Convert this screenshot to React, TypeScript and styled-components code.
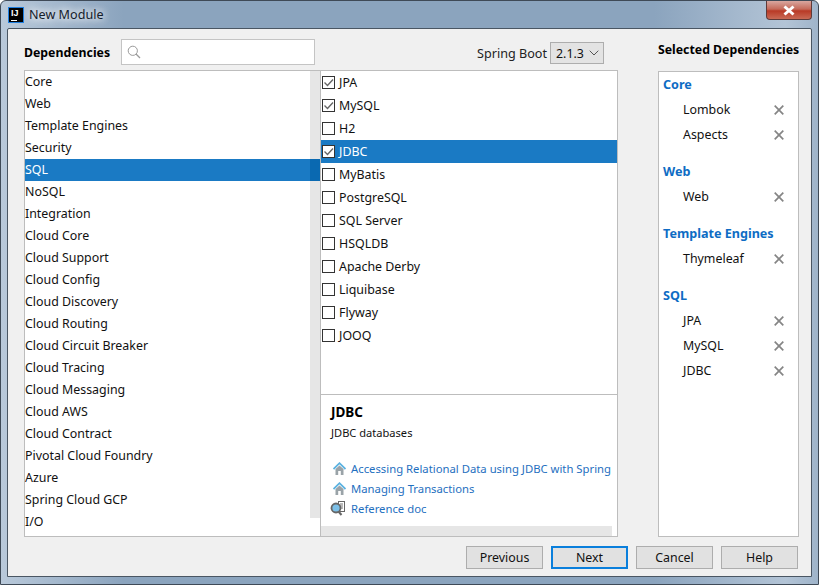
import React from "react";
import styled, { createGlobalStyle } from "styled-components";

const Global = createGlobalStyle`
  html, body { margin: 0; padding: 0; }
  body { font-family: "Noto Sans", "Open Sans", sans-serif; font-size: 12.4px; color: #111; }
  * { box-sizing: border-box; }
`;

const Window = styled.div`
  width: 819px; height: 585px; position: relative; display: flex; flex-direction: column;
  border: 1px solid #3f4a57; border-radius: 6px 6px 0 0; padding: 0 6px 7px;
  background: linear-gradient(90deg, #b9c9da 0, #8ba4be 15%, #8ba4be 80%, #b3c4d6 96%, #9fb4ca 100%);
`;
const TitleBar = styled.div`
  height: 27px; display: flex; align-items: center; gap: 5px; padding-left: 1px; flex: none;
`;
const TitleText = styled.span`
  font-size: 12.6px; color: #15202b; text-shadow: 0 0 8px #fff, 0 0 8px #fff;
`;
const Logo = styled.div`
  width: 16px; height: 16px; background: #000; border: 1px solid #1f7fe0; color: #fff;
  font-family: "Liberation Sans", sans-serif; font-weight: 700; font-size: 9px; line-height: 9px;
  padding-left: 2px; padding-top: 1px; position: relative;
  &::after { content: ""; position: absolute; left: 2px; bottom: 1px; width: 6px; height: 1px; background: #fff; }
`;
const CloseBtn = styled.div`
  position: absolute; top: 0; right: 6px; width: 46px; height: 19px; border: 1px solid #5f3a38; border-top: 0;
  border-radius: 0 0 4px 4px; display: flex; align-items: center; justify-content: center;
  background: linear-gradient(180deg, #d9a79f 0, #c56a5a 45%, #b93a26 55%, #c96a55 100%);
`;
const Dialog = styled.div`
  flex: 1; min-height: 0; background: #f0f0f0; border: 1px solid #4a5663; display: flex; flex-direction: column;
  padding: 10px 12px 8px 16px; border-radius: 2px 2px 0 0;
`;
const Body = styled.div`
  display: flex; gap: 40px; height: 498px; flex: none;
`;
const LeftCol = styled.div`
  width: 594px; display: flex; flex-direction: column;
`;
const TopBar = styled.div`
  height: 31px; display: flex; align-items: flex-start; flex: none;
`;
const Heading = styled.div`
  font-weight: 700; font-size: 12.3px; line-height: 28px; color: #000;
`;
const Search = styled.div`
  width: 194px; height: 26px; margin-left: 11px; background: #fff; border: 1px solid #c4c4c4;
  display: flex; align-items: center; padding-left: 5px;
`;
const Spring = styled.div`
  margin-left: auto; display: flex; align-items: center; gap: 3px; height: 26px; margin-top: 1px; margin-right: 14px;
`;
const SpringLabel = styled.span`
  font-size: 12.6px; color: #222;
`;
const Select = styled.div`
  width: 54px; height: 22px; background: #e3e3e3; border: 1px solid #adadad; display: flex; align-items: center;
  justify-content: space-between; padding: 0 4px 0 5px; font-size: 12.4px;
`;
const Panels = styled.div`
  flex: 1; min-height: 0; display: flex; background: #fff; border: 1px solid #bdbdbd;
`;
const CatList = styled.div`
  width: 296px; flex: none; border-right: 1px solid #bdbdbd; display: flex;
`;
const CatRows = styled.div`
  flex: 1; min-width: 0;
`;
const CatRow = styled.div<{ $sel?: boolean }>`
  height: 22px; line-height: 22px; font-size: 12.4px; position: relative;
  background: ${(p) => (p.$sel ? "#1a7ac4" : "transparent")};
  color: ${(p) => (p.$sel ? "#fff" : "#111")};
  margin-right: ${(p) => (p.$sel ? "-10px" : "0")};
  &::after {
    content: ""; position: absolute; top: 0; right: 0; bottom: 0; width: 10px;
    background: ${(p) => (p.$sel ? "#0a69b1" : "transparent")};
  }
`;
const VScroll = styled.div`
  width: 10px; height: 447px; background: #e6e6e6; flex: none;
`;
const Mid = styled.div`
  flex: 1; min-width: 0; display: flex; flex-direction: column;
`;
const DepList = styled.div`
  height: 324px; flex: none; border-bottom: 1px solid #bdbdbd;
`;
const DepRow = styled.div<{ $sel?: boolean }>`
  height: 23px; display: flex; align-items: center; gap: 4px; padding-left: 1px; font-size: 12.4px;
  background: ${(p) => (p.$sel ? "#1a7ac4" : "transparent")};
  color: ${(p) => (p.$sel ? "#fff" : "#111")};
`;
const DepLabel = styled.span`
  line-height: 23px; height: 23px;
`;
const Box = styled.div`
  width: 13px; height: 13px; border: 1px solid #333; background: #fff; flex: none; display: flex;
`;
const Detail = styled.div`
  flex: 1; min-height: 0; display: flex; flex-direction: column; position: relative; padding: 7px 0 0 10px;
`;
const DetailTitle = styled.div`
  font-weight: 700; font-size: 13.5px; line-height: 20px; color: #000;
`;
const DetailDesc = styled.div`
  font-size: 11.1px; line-height: 20px; margin-top: 1px; margin-bottom: 15px; color: #111;
`;
const LinkRow = styled.div`
  height: 20px; display: flex; align-items: center; gap: 5px; color: #1f6fc0; font-size: 11.3px; white-space: nowrap;
  svg { flex: none; }
`;
const HScroll = styled.div`
  position: absolute; left: 0; bottom: 0; width: 291px; height: 10px; background: #e6e6e6;
`;
const RightCol = styled.div`
  width: 141px; display: flex; flex-direction: column; flex: none;
`;
const RightHead = styled.div`
  font-weight: 700; font-size: 12.3px; line-height: 22px; height: 32px; white-space: nowrap; color: #000;
`;
const RightPanel = styled.div`
  flex: 1; background: #fff; border: 1px solid #bdbdbd; padding: 0 0 0 4px;
`;
const Group = styled.div`
  margin-bottom: 12px;
`;
const GroupHead = styled.div`
  height: 25px; line-height: 25px; font-weight: 700; color: #0e6cc4; font-size: 12.6px; white-space: nowrap;
`;
const Item = styled.div`
  height: 25px; display: flex; align-items: center; justify-content: space-between; padding: 0 14px 0 20px; font-size: 12.4px;
`;
const ItemName = styled.span`
  height: 25px; line-height: 26px;
`;
const Footer = styled.div`
  margin-top: 9px; margin-right: 1px; display: flex; justify-content: flex-end; gap: 8px; flex: none;
`;
const Btn = styled.div<{ $primary?: boolean }>`
  width: 77px; height: 23px; background: #e1e1e1; display: flex; align-items: center; justify-content: center;
  border: ${(p) => (p.$primary ? "2px solid #0a7fdc" : "1px solid #adadad")}; font-size: 12.4px; color: #111;
`;

const Check = () => (
  <svg width="11" height="11" viewBox="0 0 11 11"><path d="M1.5 5.5 4.5 8.5 10 2.5" fill="none" stroke="#666" strokeWidth="1.4" /></svg>
);
const Cross = () => (
  <svg width="10" height="10" viewBox="0 0 10 10"><path d="M.7.7 9.3 9.3M9.3.7.7 9.3" stroke="#858585" strokeWidth="1.7" /></svg>
);
const House = () => (
  <svg width="13" height="13" viewBox="0 0 13 13" style={{ marginLeft: 2 }}>
    <path d="M2.5 7V13H5.2V9H7.8V13H10.5V7L6.5 3.5Z" fill="#9aa3a8" />
    <path d="M.5 7 6.5 1.2 12.5 7" fill="none" stroke="#5cb2e0" strokeWidth="1.8" />
  </svg>
);
const RefDoc = () => (
  <svg width="16" height="15" viewBox="0 0 16 15" style={{ marginLeft: -1 }}>
    <rect x="8.5" y=".5" width="6" height="10" fill="#fff" stroke="#666" />
    <path d="M10 3h3M10 5h3M10 7h3" stroke="#777" />
    <circle cx="6" cy="7" r="4.5" fill="#7cc0e8" stroke="#666" strokeWidth="1.8" />
    <path d="M8.5 10.5 11.5 14" stroke="#666" strokeWidth="2" />
  </svg>
);

const cats = ["Core","Web","Template Engines","Security","SQL","NoSQL","Integration","Cloud Core","Cloud Support","Cloud Config","Cloud Discovery","Cloud Routing","Cloud Circuit Breaker","Cloud Tracing","Cloud Messaging","Cloud AWS","Cloud Contract","Pivotal Cloud Foundry","Azure","Spring Cloud GCP","I/O"];
const deps = [["JPA",1],["MySQL",1],["H2",0],["JDBC",1],["MyBatis",0],["PostgreSQL",0],["SQL Server",0],["HSQLDB",0],["Apache Derby",0],["Liquibase",0],["Flyway",0],["JOOQ",0]] as const;
const groups = [
  { name: "Core", items: ["Lombok", "Aspects"] },
  { name: "Web", items: ["Web"] },
  { name: "Template Engines", items: ["Thymeleaf"] },
  { name: "SQL", items: ["JPA", "MySQL", "JDBC"] },
];

export default function App() {
  return (
    <Window>
      <Global />
      <TitleBar>
        <Logo>IJ</Logo>
        <TitleText>New Module</TitleText>
      </TitleBar>
      <CloseBtn>
        <svg width="14" height="11" viewBox="0 0 14 11"><path d="M2.5 1.5 11.5 9.5M11.5 1.5 2.5 9.5" stroke="#fff" strokeWidth="3" /></svg>
      </CloseBtn>
      <Dialog>
        <Body>
          <LeftCol>
            <TopBar>
              <Heading>Dependencies</Heading>
              <Search>
                <svg width="14" height="14" viewBox="0 0 14 14"><circle cx="5.8" cy="5.8" r="4.6" fill="none" stroke="#9a9a9a" /><path d="M9 9 13 13" stroke="#9a9a9a" strokeWidth="1.2" /></svg>
              </Search>
              <Spring>
                <SpringLabel>Spring Boot</SpringLabel>
                <Select>
                  2.1.3
                  <svg width="10" height="6" viewBox="0 0 10 6"><path d="M.7.7 5 5 9.3.7" fill="none" stroke="#555" /></svg>
                </Select>
              </Spring>
            </TopBar>
            <Panels>
              <CatList>
                <CatRows>
                  {cats.map((c) => (
                    <CatRow key={c} $sel={c === "SQL"}>{c}</CatRow>
                  ))}
                </CatRows>
                <VScroll />
              </CatList>
              <Mid>
                <DepList>
                  {deps.map(([d, on]) => (
                    <DepRow key={d} $sel={d === "JDBC"}>
                      <Box>{on ? <Check /> : null}</Box>
                      <DepLabel>{d}</DepLabel>
                    </DepRow>
                  ))}
                </DepList>
                <Detail>
                  <DetailTitle>JDBC</DetailTitle>
                  <DetailDesc>JDBC databases</DetailDesc>
                  <LinkRow><House />Accessing Relational Data using JDBC with Spring</LinkRow>
                  <LinkRow><House />Managing Transactions</LinkRow>
                  <LinkRow><RefDoc />Reference doc</LinkRow>
                  <HScroll />
                </Detail>
              </Mid>
            </Panels>
          </LeftCol>
          <RightCol>
            <RightHead>Selected Dependencies</RightHead>
            <RightPanel>
              {groups.map((g) => (
                <Group key={g.name}>
                  <GroupHead>{g.name}</GroupHead>
                  {g.items.map((i) => (
                    <Item key={i}><ItemName>{i}</ItemName><Cross /></Item>
                  ))}
                </Group>
              ))}
            </RightPanel>
          </RightCol>
        </Body>
        <Footer>
          <Btn>Previous</Btn>
          <Btn $primary>Next</Btn>
          <Btn>Cancel</Btn>
          <Btn>Help</Btn>
        </Footer>
      </Dialog>
    </Window>
  );
}
